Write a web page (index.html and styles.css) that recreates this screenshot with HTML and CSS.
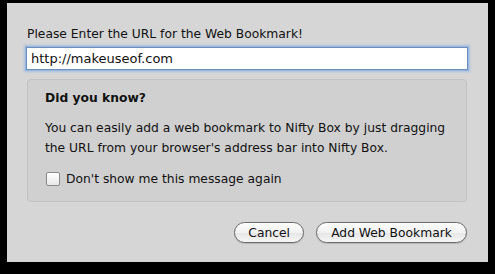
FILE: index.html
```html
<!DOCTYPE html>
<html lang="en">
<head>
    <meta charset="UTF-8">
    <title>Add Web Bookmark</title>
    <link rel="stylesheet" href="styles.css">
</head>
<body>
    <div class="sheet">
        <p class="prompt">Please Enter the URL for the Web Bookmark!</p>
        <div class="url-field">http://makeuseof.com</div>
        <div class="tip">
            <h4>Did you know?</h4>
            <p>You can easily add a web bookmark to Nifty Box by just dragging the URL from your browser's address bar into Nifty Box.</p>
            <label class="check"><span class="box"></span>Don't show me this message again</label>
        </div>
        <div class="actions">
            <button class="btn">Cancel</button>
            <button class="btn btn-wide">Add Web Bookmark</button>
        </div>
    </div>
</body>
</html>
```

FILE: styles.css
```css
body {
    margin: 0;
    background: #000;
    font-family: 'DejaVu Sans', sans-serif;
    font-size: 12.3px;
    color: #111;
    width: 495px;
    height: 274px;
    overflow: hidden;
}
.sheet {
    margin: 3px 0 0 7px;
    width: 481px;
    height: 259px;
    background: #d6d6d6;
    box-sizing: border-box;
    padding: 23px 20px 0 19px;
}
.prompt {
    margin: 0 0 0 1px;
    line-height: 16px;
}
.url-field {
    margin-top: 5px;
    height: 23px;
    box-sizing: border-box;
    background: #fff;
    border: 1px solid #6d8fc0;
    box-shadow: 0 0 0 1px #9bb6dc, 0 0 2px 2px #a9c1e2;
    padding: 2px 4px;
    line-height: 17px;
    font-size: 13px;
}
.tip {
    margin: 9px 1px 0 1px;
    height: 123px;
    box-sizing: border-box;
    background: #d0d0d0;
    border: 1px solid #c2c2c2;
    border-radius: 4px;
    padding: 10px 17px 0 17px;
}
.tip h4 {
    margin: 0;
    font-size: 12.3px;
    line-height: 16px;
}
.tip p {
    margin: 13px 0 0 0;
    line-height: 19.5px;
}
.check {
    display: flex;
    align-items: center;
    margin-top: 13px;
    line-height: 16px;
}
.box {
    width: 12px;
    height: 12px;
    margin: 0 6px 0 1px;
    border: 1px solid #8a8a8a;
    border-radius: 2px;
    background: linear-gradient(#fff, #e8e8e8);
}
.actions {
    display: flex;
    justify-content: flex-end;
    gap: 12px;
    margin-top: 20px;
    padding-right: 1px;
}
.btn {
    font-family: 'DejaVu Sans', sans-serif;
    font-size: 12.3px;
    color: #111;
    height: 21px;
    padding: 0 13px;
    border: 1px solid #6a6a6a;
    border-radius: 11px;
    background: linear-gradient(#fdfdfd, #f2f2f2 50%, #e6e6e6 51%, #f6f6f6);
    box-shadow: 0 1px 1px rgba(0, 0, 0, 0.15);
}
.btn-wide {
    width: 151px;
}
```
